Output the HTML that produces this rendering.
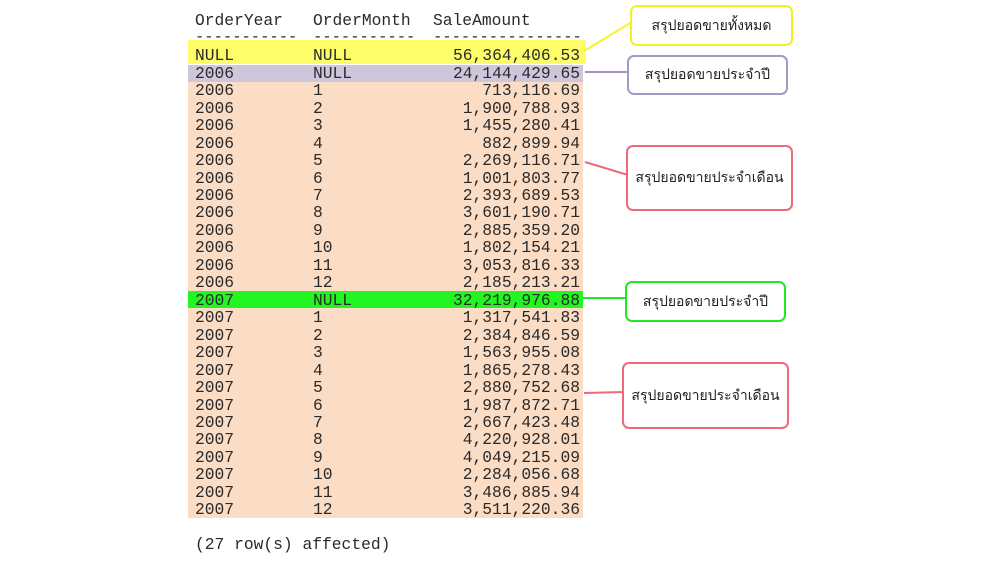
<!DOCTYPE html>
<html><head><meta charset="utf-8"><style>
body{margin:0;width:1000px;height:563px;background:#fff;position:relative;overflow:hidden;font-family:"Liberation Mono","Courier New",monospace;color:#2a2a2a}
.t{position:absolute;font-size:16.3px;line-height:17.46px;white-space:pre}
.r{position:absolute;left:188px;width:395px;height:17.46px}
.c{position:absolute;font-size:16.3px;line-height:17.46px;white-space:pre;top:0}
.box{position:absolute;background:#fff;border:2px solid;border-radius:7px;box-sizing:border-box;display:flex;align-items:center;justify-content:center;font-family:"Liberation Sans","Noto Sans CJK SC",sans-serif;font-size:14px;color:#222}
</style></head><body>
<div class="t" style="left:195px;top:12px">OrderYear</div>
<div class="t" style="left:313px;top:12px">OrderMonth</div>
<div class="t" style="left:433px;top:12px">SaleAmount</div>
<div class="t" style="left:195px;top:29px;font-size:15.5px">-----------</div>
<div class="t" style="left:313px;top:29px;font-size:15.5px">-----------</div>
<div class="t" style="left:433px;top:29px;font-size:15.5px">----------------</div>
<div style="position:absolute;left:188px;top:40px;width:398px;height:24px;background:#fdfd6a"></div>
<div style="position:absolute;left:188px;top:65px;width:395px;height:17px;background:#cfc6dc"></div>
<div style="position:absolute;left:188px;top:82px;width:395px;height:436px;background:#fbdcc4"></div>
<div style="position:absolute;left:188px;top:291px;width:395px;height:17px;background:#22f522"></div>
<div id="rows"></div>
<script>
var d=[["NULL","NULL","56,364,406.53"],["2006","NULL","24,144,429.65"],["2006","1","713,116.69"],["2006","2","1,900,788.93"],["2006","3","1,455,280.41"],["2006","4","882,899.94"],["2006","5","2,269,116.71"],["2006","6","1,001,803.77"],["2006","7","2,393,689.53"],["2006","8","3,601,190.71"],["2006","9","2,885,359.20"],["2006","10","1,802,154.21"],["2006","11","3,053,816.33"],["2006","12","2,185,213.21"],["2007","NULL","32,219,976.88"],["2007","1","1,317,541.83"],["2007","2","2,384,846.59"],["2007","3","1,563,955.08"],["2007","4","1,865,278.43"],["2007","5","2,880,752.68"],["2007","6","1,987,872.71"],["2007","7","2,667,423.48"],["2007","8","4,220,928.01"],["2007","9","4,049,215.09"],["2007","10","2,284,056.68"],["2007","11","3,486,885.94"],["2007","12","3,511,220.36"]];
var h="";d.forEach(function(r,i){var t=(47.3+17.46*i).toFixed(2);h+='<div class="r" style="top:'+t+'px"><span class="c" style="left:7px">'+r[0]+'</span><span class="c" style="left:125px">'+r[1]+'</span><span class="c" style="right:3px">'+r[2]+'</span></div>';});
document.getElementById("rows").innerHTML=h;
</script>
<div class="t" style="left:195px;top:536px">(27 row(s) affected)</div>
<svg style="position:absolute;left:0;top:0" width="1000" height="563">
<line x1="584" y1="51" x2="632" y2="22" stroke="#f5f52a" stroke-width="2"/>
<line x1="585" y1="72" x2="628" y2="72" stroke="#a98fc8" stroke-width="2"/>
<line x1="585" y1="162" x2="628" y2="175" stroke="#ee6a78" stroke-width="2"/>
<line x1="583" y1="298" x2="626" y2="298" stroke="#22e622" stroke-width="2"/>
<line x1="584" y1="393" x2="624" y2="392" stroke="#ee6a78" stroke-width="2"/>
</svg>
<div class="box" style="left:630px;top:5px;width:163px;height:41px;border-color:#f2f020">สรุปยอดขายทั้งหมด</div>
<div class="box" style="left:627px;top:55px;width:161px;height:40px;border-color:#a896c4">สรุปยอดขายประจำปี</div>
<div class="box" style="left:626px;top:145px;width:167px;height:66px;border-color:#ee6a78">สรุปยอดขายประจำเดือน</div>
<div class="box" style="left:625px;top:281px;width:161px;height:41px;border-color:#22e622">สรุปยอดขายประจำปี</div>
<div class="box" style="left:622px;top:362px;width:167px;height:67px;border-color:#ee6a78">สรุปยอดขายประจำเดือน</div>
</body></html>
